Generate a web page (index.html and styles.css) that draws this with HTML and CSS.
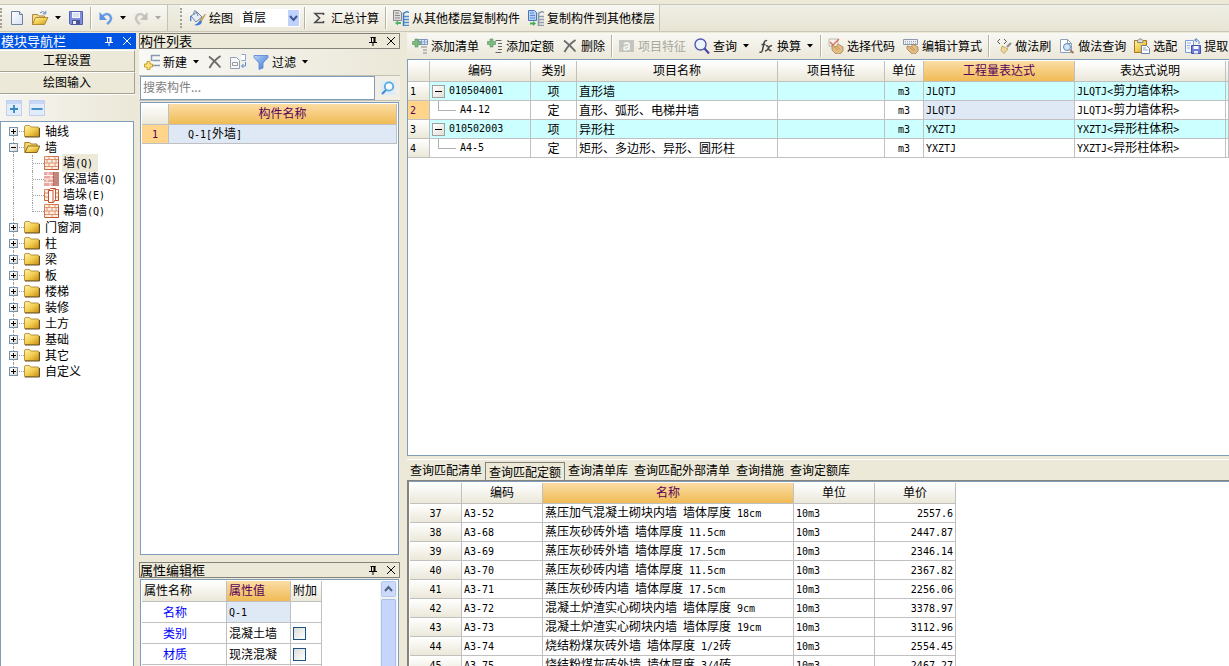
FILE: index.html
```html
<!DOCTYPE html>
<html lang="zh-CN">
<head>
<meta charset="utf-8">
<title>构件做法</title>
<link rel="stylesheet" href="styles.css">
</head>
<body>
<svg class="defs" aria-hidden="true">
  <defs>
    <linearGradient id="gold" x1="0" y1="0" x2="1" y2="1"><stop offset="0" stop-color="#fff3a8"/><stop offset=".5" stop-color="#f3cf52"/><stop offset="1" stop-color="#c98d12"/></linearGradient>
    <linearGradient id="brick" x1="0" y1="0" x2="1" y2="1"><stop offset="0" stop-color="#e08a60"/><stop offset="1" stop-color="#b8431c"/></linearGradient>
    <linearGradient id="blue" x1="0" y1="0" x2="1" y2="1"><stop offset="0" stop-color="#b5d4fb"/><stop offset="1" stop-color="#3f74cf"/></linearGradient>
    <linearGradient id="paper" x1="0" y1="0" x2="1" y2="1"><stop offset="0" stop-color="#fff"/><stop offset="1" stop-color="#d5e0f2"/></linearGradient>
  </defs>
  <symbol id="i-new" viewBox="0 0 16 16"><path d="M2.500 1.500h8l3 3v10h-11z" fill="url(#paper)" stroke="#6d83a3"/><path d="M10.500 1.500v3h3" fill="#cfdcf0" stroke="#6d83a3"/></symbol>
  <symbol id="i-open" viewBox="0 0 18 16"><path d="M1.500 14.500v-10h5l1 1.500h6v3" fill="#f7dc86" stroke="#a98745"/><path d="M1.500 14.500l3-7h12.500l-3.500 7z" fill="url(#gold)" stroke="#b48a35"/><path d="M9 3q3-3 5 0M14.800 .8v3h-3" fill="none" stroke="#6b86bb"/></symbol>
  <symbol id="i-save" viewBox="0 0 16 16"><path d="M1.500 1.500h13v13h-12l-1-1z" fill="#7f8dde" stroke="#5361ad"/><path d="M4 2h8v6H4z" fill="#f3f5ff"/><path d="M5 4h6M5 6h6" stroke="#c3c9e5"/><path d="M4 10h8v4.500H4z" fill="#4c5594"/><path d="M5 11h3v3H5z" fill="#eef"/></symbol>
  <symbol id="i-undo" viewBox="0 0 16 16"><path d="M4 7q4-5 8-1.500Q15 10 9 14" fill="none" stroke="#6f9ee8" stroke-width="2.500"/><path d="M1.500 2v8H9z" fill="#5f92e4"/></symbol>
  <symbol id="i-redo" viewBox="0 0 16 16"><path d="M12 7Q8 2 4 5.500 1 10 7 14" fill="none" stroke="#c6c6c2" stroke-width="2.500"/><path d="M14.500 2v8H7z" fill="#c0c0bc"/></symbol>
  <symbol id="i-paint" viewBox="0 0 16 16"><path d="M1 6l6-4 5 5-6 5z" fill="#e5edf9" stroke="#6a84a8"/><path d="M4 5Q3 0 6 1l2 5" fill="none" stroke="#6a84a8"/><path d="M1 6q-1 3 0 5" stroke="#4f82cf" stroke-width="1.500" fill="none"/><path d="M15.500 4L10 10l1.500 1.500z" fill="#e8b94f" stroke="#a47a2b" stroke-width=".6"/><path d="M10 10l2 2q-1 3-5 3.500l-3-.5q4-1 6-5z" fill="#447bd8"/></symbol>
  <symbol id="i-sum" viewBox="0 0 16 16"><path d="M11.500 5V3.500H3l4.500 4.500L3 12.500h8.500V11" fill="none" stroke="#4d4d4d" stroke-width="1.600"/></symbol>
  <symbol id="i-copyfrom" viewBox="0 0 16 16"><path d="M.5.500h6l2 2v8h-8z" fill="#dcdcdc" stroke="#888"/><path d="M2 3h4M2 5.500h5M2 8h5" stroke="#888"/><path d="M10.500 3v13" stroke="#3c79bf" stroke-width="1.500"/><path d="M10 3.500l4-2 2 1M11 6.500h5M11 9.500h5M11 12.500h5M11 15.500h5" stroke="#4d8bd0" stroke-width="1.400" fill="none"/><path d="M2 13l3-2.500V12h3v2H5v1.500z" fill="#4cb461"/></symbol>
  <symbol id="i-copyto" viewBox="0 0 16 16"><path d="M.5.500h6l2 2v8h-8z" fill="#b5d1f8" stroke="#4b76ba"/><path d="M2 3h4M2 5.500h5M2 8h5" stroke="#5a88cc"/><path d="M10.500 3v13" stroke="#8896a5" stroke-width="1.500"/><path d="M10 3.500l4-2 2 1M11 6.500h5M11 9.500h5M11 12.500h5M11 15.500h5" stroke="#8e9cab" stroke-width="1.400" fill="none"/><path d="M8 13.500L5 11v1.500H2v2h3V16z" fill="#3fae55"/></symbol>
  <symbol id="i-addlist" viewBox="0 0 16 16"><path d="M6.500 1.500h9v5h-9z" fill="#dde9fa" stroke="#7d95bb"/><path d="M7 4h8M9.500 2v4M12.500 2v4" stroke="#8ba5cc"/><path d="M9 9h6M11 12h4M11 15h4" stroke="#888"/><path d="M3 1h3v2.500h2.500v3H6V9H3V6.500H.5v-3H3z" fill="#7cba81" stroke="#4f9459" stroke-width=".6"/></symbol>
  <symbol id="i-addquota" viewBox="0 0 16 16"><path d="M8.500 2.500h6M11 5.500h4M11 8.500h4M11 11.500h4M8.500 14.500h6" stroke="#666"/><path d="M3 1h3v2.500h2.500v3H6V9H3V6.500H.5v-3H3z" fill="#7cba81" stroke="#4f9459" stroke-width=".6"/></symbol>
  <symbol id="i-delete" viewBox="0 0 16 16"><path d="M2 2.500Q8 7 13.500 13.500M13.500 2Q6 7 2.500 14" fill="none" stroke="#6c6c6c" stroke-width="1.900"/></symbol>
  <symbol id="i-feature" viewBox="0 0 16 16"><path d="M0 2h15v12H0z" fill="#c5c5bf"/><path d="M5 6q3-2 5 0v6M10 8.500q-5-.5-5 2t5 0" fill="none" stroke="#f3f3ef" stroke-width="1.800"/></symbol>
  <symbol id="i-search" viewBox="0 0 16 16"><circle cx="6.500" cy="6.500" r="5.500" fill="#e9f5fe" stroke="#5757b0" stroke-width="1.400"/><path d="M10.500 10.500l4.500 5" stroke="#4848a5" stroke-width="2.200"/></symbol>
  <symbol id="i-fx" viewBox="0 0 16 16"><path d="M9 3Q7 1.500 6 5L4.500 12Q4 15 1.500 14M3.500 6.500h4M8 8q2-1 2.500 2t3 2.500M14 8q-2-1-3.500 2T7 13" fill="none" stroke="#444" stroke-width="1.500"/></symbol>
  <symbol id="i-code" viewBox="0 0 16 16"><path d="M1 1h9v8L1 8z" fill="#f6f0ee" stroke="#bba"/><path d="M2 4l3 3 6-6" fill="none" stroke="#d66b56" stroke-width="1.300"/><path d="M4 7l4 2 2-3 5 3v4l-3 3H8l-4-4z" fill="#e2bd83" stroke="#9c7747" stroke-width=".7"/><path d="M6 9l4 3M8 8l4 3" stroke="#c49a62"/></symbol>
  <symbol id="i-formula" viewBox="0 0 16 16"><path d="M.5 1.500h14v5H.5z" fill="#edf1f6" stroke="#8d99ab"/><path d="M2 3.500h11M2 5.200h11" stroke="#9ba7b8" stroke-dasharray="1 1"/><path d="M4 8l4 1 2-3 5 3v4l-3 3H9l-5-5z" fill="#e2bd83" stroke="#9c7747" stroke-width=".7"/><path d="M7 10l4 3M9 9l3 3" stroke="#c49a62"/></symbol>
  <symbol id="i-brush" viewBox="0 0 16 16"><path d="M4 1L1.500 3.500 4 6M8 1l2.500 2.500L8 6" fill="none" stroke="#555"/><path d="M15 5l-4 4" stroke="#8d8d8d" stroke-width="2"/><path d="M6 8l6 3-4 4.500-3-3z" fill="#f1d794" stroke="#b2914d" stroke-width=".7"/></symbol>
  <symbol id="i-query" viewBox="0 0 16 16"><path d="M1.500 1.500h7l4 4v9h-11z" fill="#fff" stroke="#8da0bb"/><path d="M8.500 1.500v4h4" fill="none" stroke="#8da0bb"/><circle cx="8" cy="9" r="3.500" fill="#d1e7fb" stroke="#6384b2"/><path d="M11 12l3.500 3" stroke="#a77950" stroke-width="2"/></symbol>
  <symbol id="i-match" viewBox="0 0 16 16"><path d="M.5 2.500h12v12H.5z" fill="url(#gold)" stroke="#a77529"/><path d="M3.500 4.500v-2l2-1.500h2l1.500 1.500v2z" fill="#ddd" stroke="#888"/><path d="M7.500 7.500h5l3 3v5h-8z" fill="#fff" stroke="#6c81a6"/><path d="M9 10h3M9 12h5" stroke="#91a5c5"/></symbol>
  <symbol id="i-extract" viewBox="0 0 16 16"><path d="M.5 2.500h8v12h-8z" fill="#f7faff" stroke="#7d9cd4"/><path d="M2 5h4M2 7.500h3M2 10h3" stroke="#94aedd"/><path d="M6.500 7.500h9v8h-9z" fill="#6d7dd8" stroke="#4353a5"/><path d="M8.500 8h5v3h-5z" fill="#fff"/><path d="M9 13h4v2.500H9z" fill="#e5e9ff"/><path d="M14 6q1-5-4-4M12 .5L9.500 2 12 4" fill="none" stroke="#4f83d3"/></symbol>
  <symbol id="i-create" viewBox="0 0 16 16"><path d="M7 1.500h9M8.500 6.500H16M7 11.500h9M7.500 1v6" fill="none" stroke="#8798b0" stroke-width="1.500"/><path d="M3 7.500h3v2.500h2.500v3H6v2.500H3V13H.5v-3H3z" fill="#ffe178" stroke="#b99020" stroke-width=".8"/></symbol>
  <symbol id="i-copy" viewBox="0 0 16 16"><path d="M.5 3.500h6l3 3v8h-9z" fill="#f8f8f8" stroke="#92a0b2"/><path d="M2.500 8.500h5v3h-5z" fill="none" stroke="#999"/><path d="M11.500.5h4v6h-4" fill="#fff" stroke="#8ea5ca"/><path d="M15.500 8v4h-4M13.500 10l-2 2 2 2" fill="none" stroke="#5d88d2"/></symbol>
  <symbol id="i-filter" viewBox="0 0 16 16"><path d="M1 1.500h14v2L10 9v5l-4 1.500V9L1 3.500z" fill="url(#blue)" stroke="#5384d3" stroke-width=".8"/></symbol>
  <symbol id="i-find" viewBox="0 0 16 16"><path d="M1 1h14v14H1z" fill="#dcecf8"/><circle cx="9" cy="6.500" r="4.200" fill="#f6fcff" stroke="#58a9e2" stroke-width="1.800"/><path d="M6 10l-4 4" stroke="#438fcf" stroke-width="2.200"/></symbol>
  <symbol id="i-plus" viewBox="0 0 16 16"><path d="M.5.500h15v15H.5z" fill="#e2edfb" stroke="#c0d0ec"/><path d="M1 1h14v3H1z" fill="#c6d7f7"/><path d="M8 5v8M4 9h8" stroke="#3587be" stroke-width="1.800"/></symbol>
  <symbol id="i-minus" viewBox="0 0 16 16"><path d="M.5.500h15v15H.5z" fill="#e2edfb" stroke="#c0d0ec"/><path d="M1 1h14v3H1z" fill="#c6d7f7"/><path d="M2.500 9h11" stroke="#3587be" stroke-width="1.800"/></symbol>
  <symbol id="i-folder" viewBox="0 0 16 16"><path d="M.5 13.500V4q0-1.500 1.500-1.500h3.500L7 4h7q1 0 1 1v8.500z" fill="url(#gold)" stroke="#a6822d" stroke-width=".8"/><path d="M1 14h14.500V5" fill="none" stroke="#6c501b"/></symbol>
  <symbol id="i-folderopen" viewBox="0 0 16 16"><path d="M.8 13.500v-10h5L7 5h6v2" fill="#f8d968" stroke="#a6822d"/><path d="M1 13.500L4 7h11.800L13 13.500z" fill="url(#gold)" stroke="#8c6719"/></symbol>
  <symbol id="i-wall" viewBox="0 0 16 16"><path d="M.5 1.500h14v13H.5z" fill="#fff0e5" stroke="url(#brick)"/><path d="M1 4.500h13M1 8h13M1 11.500h13M5 1.500v3M11 1.500v3M8 4.500v3.500M3 4.500v3.500M12 4.500v3.500M5 8v3.500M11 8v3.500M8 11.500v3" stroke="#dc9270"/></symbol>
  <symbol id="i-warmwall" viewBox="0 0 16 16"><path d="M0 1h10v14H0z" fill="#e6a8a0"/><path d="M0 4.500h10M0 8h10M0 11.500h10M4 1v3M7 5v3M3 8v3M6 12v3" stroke="#fff2ee"/><path d="M10 1v14M12 1v14M14 1v14" stroke="#9c3824" stroke-width="1.200"/></symbol>
  <symbol id="i-pier" viewBox="0 0 16 16"><path d="M.5 2.500h14v11H.5z" fill="#fff0e5" stroke="url(#brick)"/><path d="M1 6h3M1 10h3M12 6h2M12 10h2" stroke="#d98660"/><path d="M4.500 3.500l2-2h5v11l-2 3h-5z" fill="#fff" stroke="#c5542e"/><path d="M4.500 3.500h4.500l2-2M9 3.500v12" fill="none" stroke="#c5542e"/></symbol>
  <symbol id="i-pin" viewBox="0 0 10 10"><path d="M2.500 1.500h5M3.500 1.500V6M1 6.500h8M5 6.500V10" fill="none" stroke="currentColor"/><path d="M6.500 1v5.500" fill="none" stroke="currentColor" stroke-width="2"/></symbol>
  <symbol id="i-close" viewBox="0 0 10 10"><path d="M1 1l8 8M9 1L1 9" fill="none" stroke="currentColor"/></symbol>
  <symbol id="i-arrow" viewBox="0 0 10 6"><path d="M3 1h6L6 4.500z" fill="currentColor"/></symbol>
</svg>

<header class="toolbars">
  <div class="toolbar edit-bar">
    <span class="grip"></span>
    <button class="tool" aria-label="新建工程"><svg class="icon"><use href="#i-new"/></svg></button>
    <button class="tool" aria-label="打开"><svg class="icon wide"><use href="#i-open"/></svg><svg class="arrow"><use href="#i-arrow"/></svg></button>
    <button class="tool" aria-label="保存"><svg class="icon"><use href="#i-save"/></svg></button>
    <span class="sep"></span>
    <button class="tool" aria-label="撤销"><svg class="icon"><use href="#i-undo"/></svg><svg class="arrow"><use href="#i-arrow"/></svg></button>
    <button class="tool" aria-label="恢复" disabled><svg class="icon"><use href="#i-redo"/></svg><svg class="arrow"><use href="#i-arrow"/></svg></button>
  </div>
  <div class="toolbar">
    <span class="grip"></span>
    <button class="tool"><svg class="icon"><use href="#i-paint"/></svg>绘图</button>
    <span class="floor"><select aria-label="楼层"><option>首层</option></select><svg class="chevron" viewBox="0 0 11 16"><path d="M2 6l3.500 4L9 6" fill="none" stroke="#3c5795" stroke-width="2"/></svg></span>
    <span class="sep"></span>
    <button class="tool"><svg class="icon"><use href="#i-sum"/></svg>汇总计算</button>
    <span class="sep"></span>
    <button class="tool"><svg class="icon"><use href="#i-copyfrom"/></svg>从其他楼层复制构件</button>
    <button class="tool"><svg class="icon"><use href="#i-copyto"/></svg>复制构件到其他楼层</button>
  </div>
</header>

<main class="workspace">
  <nav class="navigator">
    <h2 class="title active">模块导航栏<span class="title-tools"><button aria-label="固定导航栏"><svg><use href="#i-pin"/></svg></button><button aria-label="关闭导航栏"><svg><use href="#i-close"/></svg></button></span></h2>
    <button class="module">工程设置</button>
    <button class="module">绘图输入</button>
    <div class="fold-bar">
      <button aria-label="全部展开"><svg class="icon"><use href="#i-plus"/></svg></button>
      <button aria-label="全部折叠"><svg class="icon"><use href="#i-minus"/></svg></button>
    </div>
    <ul class="tree">
      <li class="node"><button class="expander plus" aria-label="展开轴线"></button><svg class="icon"><use href="#i-folder"/></svg>轴线</li>
      <li class="node"><button class="expander" aria-label="折叠墙"></button><svg class="icon"><use href="#i-folderopen"/></svg>墙</li>
      <li class="leaf"><svg class="icon"><use href="#i-wall"/></svg><span class="picked">墙<span class="half">(Q)</span></span></li>
      <li class="leaf"><svg class="icon"><use href="#i-warmwall"/></svg><span>保温墙<span class="half">(Q)</span></span></li>
      <li class="leaf"><svg class="icon"><use href="#i-pier"/></svg><span>墙垛<span class="half">(E)</span></span></li>
      <li class="leaf end"><svg class="icon"><use href="#i-wall"/></svg><span>幕墙<span class="half">(Q)</span></span></li>
      <li class="node"><button class="expander plus" aria-label="展开门窗洞"></button><svg class="icon"><use href="#i-folder"/></svg>门窗洞</li>
      <li class="node"><button class="expander plus" aria-label="展开柱"></button><svg class="icon"><use href="#i-folder"/></svg>柱</li>
      <li class="node"><button class="expander plus" aria-label="展开梁"></button><svg class="icon"><use href="#i-folder"/></svg>梁</li>
      <li class="node"><button class="expander plus" aria-label="展开板"></button><svg class="icon"><use href="#i-folder"/></svg>板</li>
      <li class="node"><button class="expander plus" aria-label="展开楼梯"></button><svg class="icon"><use href="#i-folder"/></svg>楼梯</li>
      <li class="node"><button class="expander plus" aria-label="展开装修"></button><svg class="icon"><use href="#i-folder"/></svg>装修</li>
      <li class="node"><button class="expander plus" aria-label="展开土方"></button><svg class="icon"><use href="#i-folder"/></svg>土方</li>
      <li class="node"><button class="expander plus" aria-label="展开基础"></button><svg class="icon"><use href="#i-folder"/></svg>基础</li>
      <li class="node"><button class="expander plus" aria-label="展开其它"></button><svg class="icon"><use href="#i-folder"/></svg>其它</li>
      <li class="node"><button class="expander plus" aria-label="展开自定义"></button><svg class="icon"><use href="#i-folder"/></svg>自定义</li>
    </ul>
  </nav>

  <div class="middle">
    <section class="components">
      <h2 class="title">构件列表<span class="title-tools"><button aria-label="固定构件列表"><svg><use href="#i-pin"/></svg></button><button aria-label="关闭构件列表"><svg><use href="#i-close"/></svg></button></span></h2>
      <div class="toolbar list-bar">
        <button class="tool"><svg class="icon"><use href="#i-create"/></svg>新建<svg class="arrow"><use href="#i-arrow"/></svg></button>
        <button class="tool" aria-label="删除构件"><svg class="icon"><use href="#i-delete"/></svg></button>
        <button class="tool" aria-label="复制构件"><svg class="icon"><use href="#i-copy"/></svg></button>
        <button class="tool"><svg class="icon"><use href="#i-filter"/></svg>过滤<svg class="arrow"><use href="#i-arrow"/></svg></button>
      </div>
      <div class="search">
        <input type="text" placeholder="搜索构件..." aria-label="搜索构件">
        <button aria-label="搜索"><svg class="icon"><use href="#i-find"/></svg></button>
      </div>
      <div class="sheet">
        <table class="grid component-grid">
          <colgroup><col class="c-27"><col></colgroup>
          <thead><tr><th></th><th class="hot">构件名称</th></tr></thead>
          <tbody><tr><td class="num hot">1</td><td class="current"><span class="half">Q-1[</span>外墙<span class="half">]</span></td></tr></tbody>
        </table>
      </div>
    </section>
    <section class="properties">
      <h2 class="title">属性编辑框<span class="title-tools"><button aria-label="固定属性编辑框"><svg><use href="#i-pin"/></svg></button><button aria-label="关闭属性编辑框"><svg><use href="#i-close"/></svg></button></span></h2>
      <div class="sheet property-sheet">
        <table class="grid property-grid">
          <colgroup><col class="c-85"><col class="c-64"><col class="c-31"></colgroup>
          <thead><tr><th>属性名称</th><th class="hot">属性值</th><th>附加</th></tr></thead>
          <tbody>
            <tr><td class="key">名称</td><td class="current half">Q-1</td><td></td></tr>
            <tr><td class="key">类别</td><td>混凝土墙</td><td><input type="checkbox" aria-label="附加类别"></td></tr>
            <tr><td class="key">材质</td><td>现浇混凝</td><td><input type="checkbox" aria-label="附加材质"></td></tr>
            <tr><td></td><td></td><td></td></tr>
          </tbody>
        </table>
        <div class="scrollbar"><button aria-label="向上滚动"><svg class="chevron" viewBox="0 0 13 14"><path d="M3 9l3.500-4L10 9" fill="none" stroke="#4d6185" stroke-width="2"/></svg></button><div class="thumb"></div></div>
      </div>
    </section>
  </div>

  <div class="methods">
    <div class="toolbar method-bar">
      <button class="tool"><svg class="icon"><use href="#i-addlist"/></svg>添加清单</button>
      <button class="tool"><svg class="icon"><use href="#i-addquota"/></svg>添加定额</button>
      <button class="tool"><svg class="icon"><use href="#i-delete"/></svg>删除</button>
      <span class="sep"></span>
      <button class="tool" disabled><svg class="icon"><use href="#i-feature"/></svg>项目特征</button>
      <button class="tool"><svg class="icon"><use href="#i-search"/></svg>查询<svg class="arrow"><use href="#i-arrow"/></svg></button>
      <button class="tool"><svg class="icon"><use href="#i-fx"/></svg>换算<svg class="arrow"><use href="#i-arrow"/></svg></button>
      <span class="sep"></span>
      <button class="tool"><svg class="icon"><use href="#i-code"/></svg>选择代码</button>
      <button class="tool"><svg class="icon"><use href="#i-formula"/></svg>编辑计算式</button>
      <span class="sep"></span>
      <button class="tool"><svg class="icon"><use href="#i-brush"/></svg>做法刷</button>
      <button class="tool"><svg class="icon"><use href="#i-query"/></svg>做法查询</button>
      <button class="tool"><svg class="icon"><use href="#i-match"/></svg>选配</button>
      <button class="tool"><svg class="icon"><use href="#i-extract"/></svg>提取</button>
    </div>
    <div class="sheet method-sheet">
      <table class="grid method-grid">
        <colgroup><col class="c-22"><col class="c-101"><col class="c-46"><col class="c-201"><col class="c-107"><col class="c-39"><col class="c-151"><col class="c-151"><col></colgroup>
        <thead><tr><th></th><th>编码</th><th>类别</th><th>项目名称</th><th>项目特征</th><th>单位</th><th class="hot">工程量表达式</th><th>表达式说明</th><th></th></tr></thead>
        <tbody>
          <tr class="item"><td class="num">1</td><td><div class="code"><button class="collapse" aria-label="折叠"></button><span class="half">010504001</span></div></td><td class="mid">项</td><td>直形墙</td><td></td><td class="mid half">m3</td><td class="half">JLQTJ</td><td><span class="half">JLQTJ&lt;</span>剪力墙体积<span class="half">&gt;</span></td><td></td></tr>
          <tr><td class="num hot">2</td><td><div class="code"><span class="elbow"></span><span class="half">A4-12</span></div></td><td class="mid">定</td><td>直形、弧形、电梯井墙</td><td></td><td class="mid half">m3</td><td class="current half">JLQTJ</td><td><span class="half">JLQTJ&lt;</span>剪力墙体积<span class="half">&gt;</span></td><td></td></tr>
          <tr class="item"><td class="num">3</td><td><div class="code"><button class="collapse" aria-label="折叠"></button><span class="half">010502003</span></div></td><td class="mid">项</td><td>异形柱</td><td></td><td class="mid half">m3</td><td class="half">YXZTJ</td><td><span class="half">YXZTJ&lt;</span>异形柱体积<span class="half">&gt;</span></td><td></td></tr>
          <tr><td class="num">4</td><td><div class="code"><span class="elbow"></span><span class="half">A4-5</span></div></td><td class="mid">定</td><td>矩形、多边形、异形、圆形柱</td><td></td><td class="mid half">m3</td><td class="half">YXZTJ</td><td><span class="half">YXZTJ&lt;</span>异形柱体积<span class="half">&gt;</span></td><td></td></tr>
        </tbody>
      </table>
    </div>
    <section class="lookup">
      <div class="tabs" role="tablist">
        <button role="tab">查询匹配清单</button><button role="tab" class="selected" aria-selected="true">查询匹配定额</button><button role="tab">查询清单库</button><button role="tab">查询匹配外部清单</button><button role="tab">查询措施</button><button role="tab">查询定额库</button>
      </div>
      <div class="sheet lookup-sheet">
        <table class="grid lookup-grid">
          <colgroup><col class="c-52"><col class="c-81"><col class="c-251"><col class="c-81"><col class="c-81"></colgroup>
          <thead><tr><th></th><th>编码</th><th class="hot">名称</th><th>单位</th><th>单价</th></tr></thead>
          <tbody>
            <tr><td class="num">37</td><td class="half">A3-52</td><td>蒸压加气混凝土砌块内墙<span class="half"> </span>墙体厚度<span class="half"> 18cm</span></td><td class="half">10m3</td><td class="price half">2557.6</td></tr>
            <tr><td class="num">38</td><td class="half">A3-68</td><td>蒸压灰砂砖外墙<span class="half"> </span>墙体厚度<span class="half"> 11.5cm</span></td><td class="half">10m3</td><td class="price half">2447.87</td></tr>
            <tr><td class="num">39</td><td class="half">A3-69</td><td>蒸压灰砂砖外墙<span class="half"> </span>墙体厚度<span class="half"> 17.5cm</span></td><td class="half">10m3</td><td class="price half">2346.14</td></tr>
            <tr><td class="num">40</td><td class="half">A3-70</td><td>蒸压灰砂砖内墙<span class="half"> </span>墙体厚度<span class="half"> 11.5cm</span></td><td class="half">10m3</td><td class="price half">2367.82</td></tr>
            <tr><td class="num">41</td><td class="half">A3-71</td><td>蒸压灰砂砖内墙<span class="half"> </span>墙体厚度<span class="half"> 17.5cm</span></td><td class="half">10m3</td><td class="price half">2256.06</td></tr>
            <tr><td class="num">42</td><td class="half">A3-72</td><td>混凝土炉渣实心砌块内墙<span class="half"> </span>墙体厚度<span class="half"> 9cm</span></td><td class="half">10m3</td><td class="price half">3378.97</td></tr>
            <tr><td class="num">43</td><td class="half">A3-73</td><td>混凝土炉渣实心砌块内墙<span class="half"> </span>墙体厚度<span class="half"> 19cm</span></td><td class="half">10m3</td><td class="price half">3112.96</td></tr>
            <tr><td class="num">44</td><td class="half">A3-74</td><td>烧结粉煤灰砖外墙<span class="half"> </span>墙体厚度<span class="half"> 1/2</span>砖</td><td class="half">10m3</td><td class="price half">2554.45</td></tr>
            <tr><td class="num">45</td><td class="half">A3-75</td><td>烧结粉煤灰砖外墙<span class="half"> </span>墙体厚度<span class="half"> 3/4</span>砖</td><td class="half">10m3</td><td class="price half">2467.27</td></tr>
          </tbody>
        </table>
      </div>
    </section>
  </div>
</main>
</body>
</html>
```

FILE: styles.css
```css
* { box-sizing: border-box; }

body {
  margin: 0;
  height: 100vh;
  display: flex;
  flex-direction: column;
  overflow: hidden;
  background: #ece9d8;
  color: #000;
  font: 12px/16px "Noto Sans CJK SC", sans-serif;
}

button, input, select { font: inherit; color: inherit; }
button { border: 0; padding: 0; background: none; }

.defs { position: absolute; width: 0; height: 0; }
.icon { width: 16px; height: 16px; flex: none; }
.icon.wide { width: 18px; }
.arrow { width: 10px; height: 6px; flex: none; }

/* Latin text runs at half the width of a Chinese character */
.half { font-family: "DejaVu Sans Mono", monospace; font-size: 10px; white-space: pre; }

/* Toolbars */
.toolbars {
  display: flex;
  flex: none;
  gap: 12px;
  margin-top: 4px;
  border-top: 1px solid #cbc7b8;
  border-bottom: 1px solid #cbc7b8;
  background: linear-gradient(#f0efe6, #e8e5d4);
}
.toolbar {
  display: flex;
  align-items: center;
  height: 26px;
  flex: none;
  white-space: nowrap;
  background: linear-gradient(#f8f8f4, #ebe8d9);
}
.toolbars .toolbar { border-right: 1px solid #c5c2b2; }
.edit-bar { width: 168px; }
.tool { display: flex; align-items: center; gap: 3px; padding: 0 4px; height: 22px; }
.tool:disabled { color: #a8a89c; }
.edit-bar .tool { padding: 0 3px; }
.sep { width: 2px; height: 22px; margin: 0 2px; border-left: 1px solid #b5b29f; border-right: 1px solid #fff; }
.edit-bar .sep { margin: 0 3px; }
.grip { width: 3px; height: 20px; margin-right: 3px; border-left: 2px dotted #a5a294; }
.floor { position: relative; width: 60px; height: 18px; margin: 0 2px 0 3px; }
.floor select { appearance: none; width: 100%; height: 100%; border: 0; border-radius: 0; padding: 0 2px 2px; background: #fff; line-height: 16px; }
.floor .chevron { position: absolute; top: 1px; right: 1px; width: 11px; height: 16px; background: #bed2fb; pointer-events: none; }

/* Workspace */
.workspace { display: flex; flex: 1; min-height: 0; padding-top: 1px; }
.title {
  display: flex;
  align-items: center;
  justify-content: space-between;
  flex: none;
  height: 16px;
  margin: 0;
  border: 1px solid #84827a;
  font-size: 13px;
  font-weight: normal;
  line-height: 14px;
}
.title.active { border-color: #0054e3; background: #0054e3; color: #fff; }
.title-tools { display: flex; gap: 8px; padding: 0 3px; }
.title-tools button { display: flex; }
.title-tools svg { width: 10px; height: 10px; }
.sheet { border: 1px solid #7f9db9; background: #fff; overflow: hidden; }

/* Navigator */
.navigator { display: flex; flex-direction: column; width: 136px; flex: none; }
.navigator .title { margin-bottom: 1px; }
.module { width: 135px; height: 22px; flex: none; border-top: 1px solid #fff; border-right: 1px solid #a5a293; border-bottom: 1px solid #a5a293; line-height: 18px; padding-bottom: 2px; }
.fold-bar { display: flex; gap: 7px; width: 135px; height: 27px; flex: none; padding: 5px 6px 0; background: linear-gradient(90deg, #f6f5f0, #ebe8d8); border-top: 1px solid #fff; }
.fold-bar button { display: flex; }
.tree { flex: 1; width: 134px; margin: 0; padding: 1px 0; list-style: none; border: 1px solid #7f9db9; border-bottom: 0; background: #fff; overflow: hidden; }
.tree li { position: relative; display: flex; align-items: center; height: 16px; white-space: nowrap; }
.node { gap: 5px; padding-left: 8px; }
.node .icon { margin-left: 1px; }
.expander { position: relative; width: 9px; height: 9px; flex: none; border: 1px solid #7890a8; background: linear-gradient(135deg, #fff, #dcd9cc); z-index: 1; }
.expander::before { content: ""; position: absolute; inset: 3px 1px; height: 1px; background: #000; }
.expander.plus::after { content: ""; position: absolute; inset: 1px 3px; width: 1px; background: #000; }
.tree li::before { content: ""; position: absolute; left: 12px; top: 0; height: 16px; border-left: 1px dotted #a0a0a0; }
.tree li:first-child::before { top: 8px; height: 8px; }
.tree li:last-child::before { height: 8px; }
.node::after { content: ""; position: absolute; left: 18px; top: 8px; width: 5px; border-top: 1px dotted #a0a0a0; }
.leaf { gap: 2px; padding-left: 43px; }
.leaf > span { padding: 0 2px 0 1px; }
.leaf .half { padding: 0; }
.leaf::after { content: ""; position: absolute; left: 31px; top: 0; width: 11px; height: 16px; border-left: 1px dotted #a0a0a0; background: repeating-linear-gradient(90deg, #a0a0a0 0 1px, transparent 1px 2px) 0 8px / 100% 1px no-repeat; }
.leaf.end::after { height: 9px; }
.leaf .picked { background: #ece9d8; padding-right: 5px; }

/* Component list and properties */
.middle { display: flex; flex-direction: column; gap: 7px; width: 261px; flex: none; margin-left: 3px; }
.components { display: flex; flex-direction: column; flex: 1; min-height: 0; }
.components .sheet { flex: 1; margin: 1px 1px 0; padding: 1px; }
.list-bar { padding-left: 2px; background: linear-gradient(90deg, #f8f8f5, #ebe8d9); }
.list-bar .tool { padding: 0 4px 0 3px; }
.search { display: flex; flex: none; border-top: 1px solid #c4c1b1; border-bottom: 1px solid #c4c1b1; padding-left: 1px; background: #f1efe5; }
.search input { flex: 1; min-width: 0; height: 24px; border: 1px solid #7f9db9; padding: 0 2px 4px; background: #fff; }
.search input::placeholder { color: #808080; opacity: 1; }
.search button { display: flex; align-items: center; justify-content: center; width: 25px; }
.properties { display: flex; flex-direction: column; height: 104px; flex: none; }
.property-sheet { display: flex; justify-content: space-between; flex: 1; margin: 1px 1px 0; padding: 1px 1px 0; border-bottom: 0; }
.scrollbar { display: flex; flex-direction: column; gap: 2px; width: 17px; padding: 0 1px; background: #f3f3ee; }
.scrollbar button { display: flex; width: 15px; height: 16px; border: 1px solid #b5c8f0; border-radius: 2px; background: #cbdafb; }
.scrollbar .chevron { width: 13px; height: 14px; }
.thumb { flex: 1; border: 1px solid #a9bfee; border-bottom: 0; border-radius: 2px 2px 0 0; background: #c6d5fb; }

/* Grids */
.grid { table-layout: fixed; border-collapse: separate; border-spacing: 0; width: 100%; }
.grid th, .grid td {
  height: 19px;
  padding: 0 2px;
  border-right: 1px solid #c0c0c0;
  border-bottom: 1px solid #c0c0c0;
  overflow: hidden;
  text-align: left;
  font-weight: normal;
  white-space: nowrap;
}
.grid th { height: 21px; padding-bottom: 2px; text-align: center; background: linear-gradient(#fff, #ebe8d9); }
.grid th.hot { background: linear-gradient(#fbdda5, #f0bb55); color: #5a005a; }
.grid td.half, .grid td.num { padding-top: 2px; }
.grid .num { background: linear-gradient(#fff, #ebe8d9); font-family: "DejaVu Sans Mono", monospace; font-size: 10px; }
.grid .num.hot { background: #ffd58c; color: #5a005a; }
.grid .item td { background-color: #ccffff; }
.grid .item .num { background-color: #fff; }
.grid .mid { text-align: center; }
.grid .price { text-align: right; }
.grid .current, .grid .item .current { background: #dfe9f6; }
.c-22 { width: 22px; }
.c-27 { width: 27px; }
.c-31 { width: 31px; }
.c-39 { width: 39px; }
.c-46 { width: 46px; }
.c-52 { width: 52px; }
.c-64 { width: 64px; }
.c-81 { width: 81px; }
.c-85 { width: 85px; }
.c-101 { width: 101px; }
.c-107 { width: 107px; }
.c-151 { width: 151px; }
.c-201 { width: 201px; }
.c-251 { width: 251px; }

.component-grid .num { text-align: center; }
.component-grid .current { padding-left: 19px; }
.property-grid { width: 180px; flex: none; align-self: flex-start; }
.grid.property-grid th { text-align: left; }
.grid.property-grid td { height: 21px; }
.grid.property-grid .key { padding-left: 21px; color: #00f; }
.property-grid input { appearance: none; display: block; width: 13px; height: 13px; margin: 0; border: 1px solid #1d5281; background: linear-gradient(135deg, #dcdcd7, #fff); }

/* Methods */
.methods { display: flex; flex-direction: column; flex: 1; min-width: 0; margin-left: 7px; }
.method-bar { padding-left: 1px; overflow: hidden; }
.method-sheet { flex: 1; padding: 1px 0 0; border-right: 0; }
.grid .code { display: flex; align-items: center; height: 18px; gap: 4px; }
.collapse { position: relative; width: 13px; height: 13px; border: 1px solid #a0a0a0; background: linear-gradient(135deg, #fff, #e2e0d6); }
.collapse::before { content: ""; position: absolute; inset: 5px 2px; height: 1px; background: #000; }
.elbow { width: 18px; height: 10px; margin: 0 0 8px 6px; border-left: 1px solid #b0b0b0; border-bottom: 1px solid #b0b0b0; }

/* Lookup */
.lookup { display: flex; flex-direction: column; height: 207px; flex: none; margin-top: 3px; border-top: 1px solid #fff; }
.tabs { display: flex; align-items: flex-start; height: 21px; flex: none; border-bottom: 1px solid #84827a; white-space: nowrap; }
.tabs button { padding: 1px 3px 0; height: 18px; }
.tabs .selected { margin-top: 2px; border: 1px solid #84827a; border-bottom: 0; }
.lookup-sheet { flex: 1; padding: 1px 0 0 1px; border-left: 2px solid #84827a; border-right: 0; border-bottom: 0; }
.lookup-grid { width: 546px; }
.lookup-grid .num { text-align: center; }
```
